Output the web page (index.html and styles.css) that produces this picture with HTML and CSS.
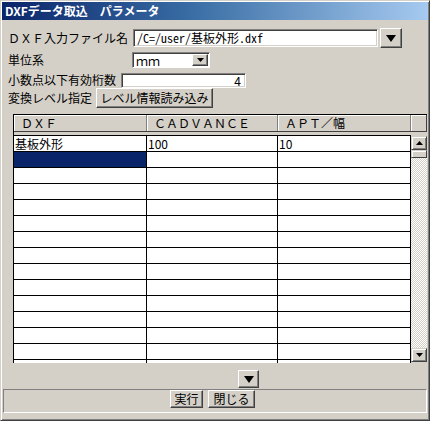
FILE: index.html
```html
<!DOCTYPE html>
<html lang="ja">
<head>
<meta charset="utf-8">
<title>DXFデータ取込 パラメータ</title>
<link rel="stylesheet" href="styles.css">
</head>
<body>
<div class="window">
  <div class="titlebar"><span class="title">DXFデータ取込　パラメータ</span></div>
  <div class="body">
    <div class="form-row row-file">
      <span class="label label-file">ＤＸＦ入力ファイル名</span>
      <div class="field field-file">/C=/user/基板外形.dxf</div>
      <button class="btn btn-arrow"><svg width="10" height="7" viewBox="0 0 10 7"><polygon points="0,0 10,0 5,7" fill="#000"/></svg></button>
    </div>
    <div class="form-row row-unit">
      <span class="label label-unit">単位系</span>
      <div class="select">
        <span class="select-value">ｍｍ</span>
        <span class="select-btn"><svg width="7" height="4" viewBox="0 0 7 4"><polygon points="0,0 7,0 3.5,4" fill="#000"/></svg></span>
      </div>
    </div>
    <div class="form-row row-digits">
      <span class="label label-digits">小数点以下有効桁数</span>
      <div class="field field-digits">4</div>
    </div>
    <div class="form-row row-level">
      <span class="label label-level">変換レベル指定</span>
      <button class="btn btn-level">レベル情報読み込み</button>
    </div>

    <div class="grid">
      <div class="grid-head">
        <div class="hcell hcell-a">ＤＸＦ</div>
        <div class="hcell hcell-b">ＣＡＤＶＡＮＣＥ</div>
        <div class="hcell hcell-a">ＡＰＴ／幅</div>
        <div class="hcell hcell-corner"></div>
      </div>
      <div class="grid-main">
        <div class="grid-rows">
          <div class="grow"><div class="cell cell-a">基板外形</div><div class="cell cell-b">100</div><div class="cell cell-a">10</div></div>
          <div class="grow"><div class="cell cell-a cell-selected"></div><div class="cell cell-b"></div><div class="cell cell-a"></div></div>
          <div class="grow"><div class="cell cell-a"></div><div class="cell cell-b"></div><div class="cell cell-a"></div></div>
          <div class="grow"><div class="cell cell-a"></div><div class="cell cell-b"></div><div class="cell cell-a"></div></div>
          <div class="grow"><div class="cell cell-a"></div><div class="cell cell-b"></div><div class="cell cell-a"></div></div>
          <div class="grow"><div class="cell cell-a"></div><div class="cell cell-b"></div><div class="cell cell-a"></div></div>
          <div class="grow"><div class="cell cell-a"></div><div class="cell cell-b"></div><div class="cell cell-a"></div></div>
          <div class="grow"><div class="cell cell-a"></div><div class="cell cell-b"></div><div class="cell cell-a"></div></div>
          <div class="grow"><div class="cell cell-a"></div><div class="cell cell-b"></div><div class="cell cell-a"></div></div>
          <div class="grow"><div class="cell cell-a"></div><div class="cell cell-b"></div><div class="cell cell-a"></div></div>
          <div class="grow"><div class="cell cell-a"></div><div class="cell cell-b"></div><div class="cell cell-a"></div></div>
          <div class="grow"><div class="cell cell-a"></div><div class="cell cell-b"></div><div class="cell cell-a"></div></div>
          <div class="grow"><div class="cell cell-a"></div><div class="cell cell-b"></div><div class="cell cell-a"></div></div>
          <div class="grow"><div class="cell cell-a"></div><div class="cell cell-b"></div><div class="cell cell-a"></div></div>
          <div class="grow"><div class="cell cell-a"></div><div class="cell cell-b"></div><div class="cell cell-a"></div></div>
        </div>
        <div class="vscroll">
          <div class="sbtn sbtn-up"><svg width="7" height="4" viewBox="0 0 7 4"><polygon points="3.5,0 7,4 0,4" fill="#000"/></svg></div>
          <div class="sthumb"></div>
          <div class="strack"></div>
          <div class="sbtn sbtn-down"><svg width="7" height="4" viewBox="0 0 7 4"><polygon points="0,0 7,0 3.5,4" fill="#000"/></svg></div>
        </div>
      </div>
    </div>

    <div class="more-row">
      <button class="btn btn-more"><svg width="10" height="7" viewBox="0 0 10 7"><polygon points="0,0 10,0 5,7" fill="#000"/></svg></button>
    </div>
    <div class="footer">
      <button class="btn btn-cmd btn-run">実行</button>
      <button class="btn btn-cmd btn-close">閉じる</button>
    </div>
  </div>
</div>
</body>
</html>
```

FILE: styles.css
```css
* { box-sizing: border-box; }

html, body {
  margin: 0;
  padding: 0;
  background: #d4d0c8;
}

body {
  font-family: "Noto Sans CJK JP", "Noto Sans", sans-serif;
  font-size: 12px;
  color: #000;
}

.window {
  width: 430px;
  height: 421px;
  background: #d4d0c8;
  border: 1px solid;
  border-color: #d4d0c8 #404040 #404040 #d4d0c8;
  box-shadow: inset 1px 1px #ffffff, inset -1px -1px #808080;
  padding: 1px;
  display: flex;
  flex-direction: column;
}

.titlebar {
  height: 18px;
  background: linear-gradient(90deg, #0a246a 0%, #3a6ea5 45%, #a6caf0 100%);
  color: #fff;
  font-weight: bold;
  font-size: 12px;
  line-height: 18px;
  padding-left: 3px;
  white-space: nowrap;
}

.body {
  flex: 1;
  padding: 8px 0 0 6px;
  display: flex;
  flex-direction: column;
}

.form-row {
  display: flex;
  align-items: center;
  white-space: nowrap;
}

.row-file { height: 20px; }
.row-unit { height: 24px; }
.row-digits { height: 16px; }
.row-level { height: 20px; }

.label { flex: none; line-height: 14px; }
.label-file { width: 125px; }
.label-unit { width: 124px; }
.label-digits { width: 113px; }
.label-level { width: 88px; }

.field {
  background: #fff;
  border: 1px solid;
  border-color: #808080 #ffffff #ffffff #808080;
  box-shadow: inset 1px 1px #404040, inset -1px -1px #d4d0c8;
  line-height: 14px;
  white-space: nowrap;
  overflow: hidden;
}

.field-file {
  width: 245px;
  height: 18px;
  padding: 1px 3px;
  font-family: "Noto Sans Mono CJK JP", "Noto Sans CJK JP", monospace;
}

.field-digits {
  width: 125px;
  height: 15px;
  padding: 0 4px;
  text-align: right;
  line-height: 13px;
}

.btn {
  font: inherit;
  color: #000;
  background: #d4d0c8;
  border: 1px solid;
  border-color: #ffffff #404040 #404040 #ffffff;
  box-shadow: inset -1px -1px #808080;
  padding: 0;
  margin: 0;
  display: flex;
  align-items: center;
  justify-content: center;
  line-height: 14px;
  white-space: nowrap;
}

.btn-arrow {
  width: 22px;
  height: 20px;
  margin-left: 2px;
}

.btn-level {
  width: 117px;
  height: 20px;
}

.select {
  width: 78px;
  height: 16px;
  display: flex;
  align-items: stretch;
  background: #fff;
  border: 1px solid;
  border-color: #808080 #ffffff #ffffff #808080;
  box-shadow: inset 1px 1px #404040;
  padding: 1px 1px 1px 2px;
}

.select-value {
  flex: 1;
  line-height: 13px;
  padding-left: 1px;
}

.select-btn {
  width: 16px;
  display: flex;
  align-items: center;
  justify-content: center;
  background: #d4d0c8;
  border: 1px solid;
  border-color: #ffffff #404040 #404040 #ffffff;
  box-shadow: inset -1px -1px #808080;
}

/* grid */
.grid {
  margin-top: 6px;
  margin-left: 5px;
  width: 414px;
  height: 249px;
  border-top: 1px solid #000;
  border-left: 1px solid #000;
  display: flex;
  flex-direction: column;
  overflow: hidden;
}

.grid-head {
  height: 17px;
  display: flex;
  flex: none;
  border-bottom: 1px solid #404040;
}

.hcell {
  background: #d4d0c8;
  border-right: 1px solid #808080;
  box-shadow: inset 1px 1px #ffffff;
  padding-left: 7px;
  line-height: 16px;
  white-space: nowrap;
  color: #000;
}

.hcell-a { width: 133px; }
.hcell-b { width: 131px; }
.hcell-corner { width: 16px; border-right: 1px solid #404040; padding: 0; }

.grid-main {
  flex: 1;
  display: flex;
  margin-top: 3px;
  min-height: 0;
}

.grid-rows {
  width: 397px;
  border-top: 1px solid #000;
  background: #fff;
  overflow: hidden;
}

.grow {
  display: flex;
  height: 16px;
  border-bottom: 1px solid #000;
}

.cell {
  border-right: 1px solid #000;
  line-height: 15px;
  padding-left: 1px;
  white-space: nowrap;
  overflow: hidden;
}

.cell-a { width: 133px; }
.cell-b { width: 131px; }

.cell-selected {
  background: #0a246a;
}

.vscroll {
  width: 16px;
  display: flex;
  flex-direction: column;
  margin-top: 1px;
  margin-bottom: 1px;
}

.sbtn {
  height: 14px;
  flex: none;
  display: flex;
  align-items: center;
  justify-content: center;
  background: #d4d0c8;
  border: 1px solid;
  border-color: #d4d0c8 #404040 #404040 #d4d0c8;
  box-shadow: inset 1px 1px #ffffff, inset -1px -1px #808080;
}

.sthumb {
  height: 8px;
  flex: none;
  background: #d4d0c8;
  border: 1px solid;
  border-color: #d4d0c8 #404040 #404040 #d4d0c8;
  box-shadow: inset 1px 1px #ffffff;
}

.strack {
  flex: 1;
  background: repeating-conic-gradient(#ffffff 0 25%, #d4d0c8 0 50%) 0 0 / 2px 2px;
}

.more-row {
  height: 26px;
  display: flex;
  align-items: flex-start;
  padding-top: 7px;
  padding-left: 230px;
}

.btn-more {
  width: 21px;
  height: 18px;
}

.footer {
  margin-left: -5px;
  width: 424px;
  height: 24px;
  border: 1px solid;
  border-color: #808080 #ffffff #ffffff #808080;
  display: flex;
  align-items: flex-start;
  padding-left: 166px;
  gap: 5px;
}

.btn-cmd {
  height: 18px;
}

.btn-run { width: 33px; }
.btn-close { width: 47px; }
```
